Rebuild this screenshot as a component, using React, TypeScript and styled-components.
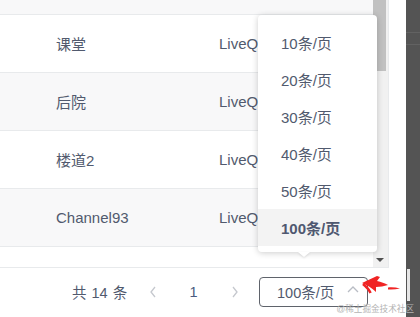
import React from "react";
import styled, { createGlobalStyle } from "styled-components";

const GlobalStyle = createGlobalStyle`
  html, body {
    margin: 0;
    padding: 0;
    background: #fff;
  }
  body {
    font-family: "Liberation Sans", "Noto Sans CJK SC", sans-serif;
    color: #515a6e;
  }
`;

const Screen = styled.div`
  position: relative;
  width: 420px;
  height: 317px;
  display: flex;
  overflow: hidden;
  background: #fff;
`;

const Main = styled.div`
  width: 406px;
  display: flex;
  flex-direction: column;
`;

const TableBox = styled.div`
  width: 389px;
  height: 268px;
  box-sizing: border-box;
  display: flex;
  border-right: 1px solid #e8eaec;
  border-bottom: 1px solid #e8eaec;
`;

const TableBody = styled.div`
  width: 373px;
  display: flex;
  flex-direction: column;
`;

const HeadRow = styled.div`
  height: 14px;
  background: #f8f8f9;
  border-bottom: 1px solid #e8eaec;
`;

const Row = styled.div<{ $striped?: boolean }>`
  height: 57px;
  display: flex;
  align-items: center;
  background: ${(p) => (p.$striped ? "#f8f8f9" : "#fff")};
  border-bottom: 1px solid #e8eaec;
  font-size: 15px;
`;

const NameCell = styled.div`
  width: 163px;
  padding-left: 56px;
  white-space: nowrap;
`;

const TypeCell = styled.div`
  white-space: nowrap;
`;

const Scrollbar = styled.div`
  width: 15px;
  background: #f1f1f1;
  display: flex;
  flex-direction: column;
  align-items: flex-start;
`;

const Thumb = styled.div`
  width: 13px;
  height: 71px;
  background: #c1c1c1;
`;

const ScrollArrow = styled.div`
  margin-top: auto;
  margin-bottom: 5px;
  margin-left: 3px;
  width: 0;
  height: 0;
  border-left: 4px solid transparent;
  border-right: 4px solid transparent;
  border-top: 4px solid #505050;
`;

const Pager = styled.div`
  height: 49px;
  display: flex;
  align-items: center;
  gap: 8px;
  padding-left: 72px;
  padding-bottom: 2px;
  box-sizing: border-box;
  font-size: 14.5px;
`;

const Total = styled.span`
  width: 56px;
  white-space: nowrap;
  word-spacing: 1px;
`;

const PageItem = styled.div<{ $active?: boolean; $disabled?: boolean }>`
  width: 33px;
  height: 30px;
  display: flex;
  align-items: center;
  justify-content: center;
  color: ${(p) => (p.$disabled ? "#c5c8ce" : p.$active ? "#4a5a80" : "#515a6e")};
`;

const SelectBox = styled.div`
  position: relative;
  width: 109px;
  height: 30px;
  box-sizing: border-box;
  border: 1px solid #5f636b;
  border-radius: 4px;
  display: flex;
  align-items: center;
  padding-left: 17px;
  font-size: 14.5px;
`;

const SelectArrow = styled.svg`
  position: absolute;
  right: 8px;
  top: 7px;
`;

const Dropdown = styled.div`
  position: absolute;
  left: 258px;
  top: 15px;
  width: 119px;
  box-sizing: border-box;
  padding: 9px 0 6px;
  background: #fff;
  border-radius: 4px;
  box-shadow: 0 1px 6px rgba(0, 0, 0, 0.2);
  z-index: 2;
`;

const DropTip = styled.div`
  position: absolute;
  left: 40px;
  bottom: -5px;
  width: 0;
  height: 0;
  border-left: 6px solid transparent;
  border-right: 6px solid transparent;
  border-top: 5px solid #fff;
  filter: drop-shadow(0 1px 1px rgba(0, 0, 0, 0.12));
`;

const Option = styled.div<{ $selected?: boolean }>`
  height: 37px;
  display: flex;
  align-items: center;
  padding-left: 23px;
  font-size: 15px;
  white-space: nowrap;
  font-weight: ${(p) => (p.$selected ? 700 : 400)};
  background: ${(p) => (p.$selected ? "#f3f3f3" : "transparent")};
  color: ${(p) => (p.$selected ? "#4f5870" : "#515a6e")};
`;

const DarkPanel = styled.div`
  width: 14px;
  height: 317px;
  background: #545454;
  display: flex;
  flex-direction: column;
`;

const PanelLine = styled.div<{ $top: number }>`
  margin-top: ${(p) => p.$top}px;
  height: 1px;
  background: #626262;
`;

const PanelEdge = styled.div`
  margin-top: 224px;
  margin-left: 1px;
  width: 3px;
  height: 32px;
  background: #e6e6e6;
`;

const RedArrow = styled.svg`
  position: absolute;
  left: 360px;
  top: 275px;
  z-index: 3;
`;

const Watermark = styled.div`
  position: absolute;
  right: 6px;
  bottom: 3px;
  font-size: 8.6px;
  color: #b4b4b4;
  white-space: nowrap;
  z-index: 3;
`;

const rows = [
  { name: "课堂", type: "LiveQ" },
  { name: "后院", type: "LiveQ" },
  { name: "楼道2", type: "LiveQ" },
  { name: "Channel93", type: "LiveQ" },
];

const sizes = [10, 20, 30, 40, 50, 100];

export default function App() {
  return (
    <>
      <GlobalStyle />
      <Screen>
        <Main>
          <TableBox>
            <TableBody>
              <HeadRow />
              {rows.map((r, i) => (
                <Row key={r.name} $striped={i % 2 === 1}>
                  <NameCell>{r.name}</NameCell>
                  <TypeCell>{r.type}</TypeCell>
                </Row>
              ))}
            </TableBody>
            <Scrollbar>
              <Thumb />
              <ScrollArrow />
            </Scrollbar>
          </TableBox>
          <Pager>
            <Total>共 14 条</Total>
            <PageItem $disabled>
              <svg width="8" height="12" viewBox="0 0 8 12">
                <path d="M6 1 L2 6 L6 11" fill="none" stroke="currentColor" strokeWidth="1.3" />
              </svg>
            </PageItem>
            <PageItem $active>1</PageItem>
            <PageItem $disabled>
              <svg width="8" height="12" viewBox="0 0 8 12">
                <path d="M2 1 L6 6 L2 11" fill="none" stroke="currentColor" strokeWidth="1.3" />
              </svg>
            </PageItem>
            <SelectBox>
              100条/页
              <SelectArrow width="12" height="8" viewBox="0 0 12 8">
                <path d="M1 7 L6 2 L11 7" fill="none" stroke="#b8bcc4" strokeWidth="1.3" />
              </SelectArrow>
            </SelectBox>
          </Pager>
        </Main>
        <DarkPanel>
          <PanelLine $top={32} />
          <PanelLine $top={11} />
          <PanelEdge />
        </DarkPanel>

        <Dropdown>
          {sizes.map((s) => (
            <Option key={s} $selected={s === 100}>
              {s}条/页
            </Option>
          ))}
          <DropTip />
        </Dropdown>

        <RedArrow width="42" height="20" viewBox="0 0 42 20">
          <path
            d="M2 8 C7 6 12 3 17 1 L20 2 L17 6 C21 7 25 8 28 10 C24 11 20 12 16 12 L16 17 C12 13 7 10 2 8 Z"
            fill="#f02424"
          />
          <path d="M28 12.5 C32 12 36 12.5 40 13.5 C36 14.5 32 14.8 28 14.5 Z" fill="#f02424" />
          <path d="M3 9 C6 11.5 9 14 10.5 18" fill="none" stroke="#f02424" strokeWidth="2.6" />
        </RedArrow>
        <Watermark>@稀土掘金技术社区</Watermark>
      </Screen>
    </>
  );
}
